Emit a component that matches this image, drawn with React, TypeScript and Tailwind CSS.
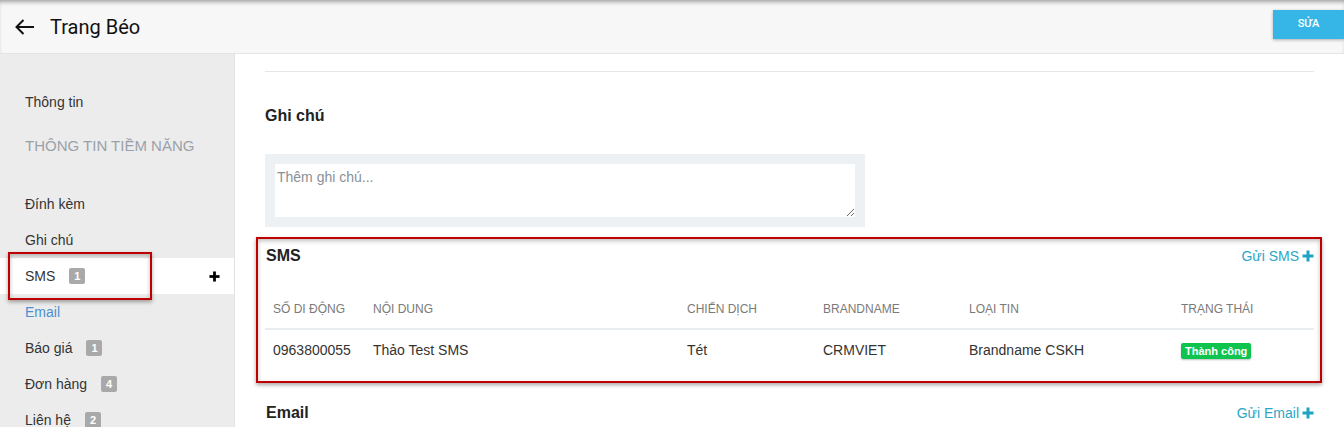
import React from 'react';

// --- DATOS ---
const menu = [
    { label: 'Đính kèm' },
    { label: 'Ghi chú' },
    { label: 'SMS', count: 1, active: true },
    { label: 'Email', link: true },
    { label: 'Báo giá', count: 1 },
    { label: 'Đơn hàng', count: 4 },
    { label: 'Liên hệ', count: 2 },
];

const smsRows = [
    { phone: '0963800055', content: 'Thảo Test SMS', campaign: 'Tét', brand: 'CRMVIET', type: 'Brandname CSKH', status: 'Thành công' },
];

const cols = [
    { title: 'Số di động', w: 'w-[108px] pl-2' },
    { title: 'Nội dung', w: 'w-[314px]' },
    { title: 'Chiến dịch', w: 'w-[136px]' },
    { title: 'Brandname', w: 'w-[146px]' },
    { title: 'Loại tin', w: 'w-[212px]' },
    { title: 'Trạng thái', w: '' },
];

const Badge = ({ n }: { n: number }) => (
    <span className="ml-[14px] inline-flex h-[16px] w-[16px] items-center justify-center rounded-[2px] bg-[#a9a9a9] text-[11px] font-bold text-white">
        {n}
    </span>
);

const PlusIcon = ({ className = '' }: { className?: string }) => (
    <svg viewBox="0 0 12 12" className={className} fill="currentColor">
        <rect x="4.5" y="0.5" width="3" height="11" />
        <rect x="0.5" y="4.5" width="11" height="3" />
    </svg>
);

const SectionHead = ({ title, action }: { title: string; action: string }) => (
    <div className="flex h-[20px] items-center justify-between">
        <h2 className="pl-px text-[16px] font-bold text-[#222]">{title}</h2>
        <a className="flex items-center text-[14px] text-[#2ba6c6]">
            {action}
            <PlusIcon className="ml-[3px] h-[12px] w-[12px] text-[#1fa3c4]" />
        </a>
    </div>
);

const Sidebar = () => (
    <aside className="h-[373px] w-[235px] shrink-0 border-r border-[#e2e2e2] bg-[#ececec] pt-[30px]">
        <div className="flex h-[36px] items-center pl-[25px] text-[14px] text-[#333]">Thông tin</div>
        <div className="mb-[14px] flex h-[52px] items-center pl-[25px] text-[15px] text-[#9ba1a9]">THÔNG TIN TIỀM NĂNG</div>
        {menu.map(item => (
            <div
                key={item.label}
                className={`flex h-[36px] items-center pl-[25px] pr-[14px] text-[14px] ${item.active ? 'bg-white' : ''} ${item.link ? 'text-[#4a90d0]' : 'text-[#333]'}`}
            >
                <span>{item.label}</span>
                {item.count ? <Badge n={item.count} /> : null}
                {item.active && <PlusIcon className="ml-auto h-[11px] w-[11px] text-black" />}
            </div>
        ))}
    </aside>
);

export default function App() {
    return (
        <div className="relative h-[427px] w-[1344px] overflow-hidden bg-white font-['Liberation_Sans',Arial,sans-serif]">
            {/* --- CABECERA --- */}
            <header className="flex h-[54px] items-center border-b border-[#e4e4e4] bg-[#f7f7f7] shadow-[inset_0_4px_4px_-2px_rgba(0,0,0,0.35)]">
                <svg viewBox="0 0 24 24" className="ml-[13px] h-[24px] w-[24px]" fill="none" stroke="#111" strokeWidth="2">
                    <path d="M21 12H3.5M10.5 5l-7 7 7 7" />
                </svg>
                <h1 className="ml-[13px] font-['Roboto',sans-serif] text-[20px] text-[#111]">Trang Béo</h1>
                <button className="ml-auto mt-[10px] h-[29px] w-[71px] self-start bg-[#35b6e6] font-['Roboto',sans-serif] text-[11px] font-medium text-white shadow-[0_1px_3px_rgba(0,0,0,0.3)]">
                    SỬA
                </button>
            </header>

            <div className="flex">
                <Sidebar />

                <main className="flex-1 px-[30px]">
                    <div className="mt-[17px] border-t border-[#e6e6e6]" />

                    <h2 className="mt-[32px] text-[16px] font-bold leading-[24px] text-[#222]">Ghi chú</h2>

                    <div className="mt-[26px] w-[600px] bg-[#edf1f4] p-[10px]">
                        <textarea
                            placeholder="Thêm ghi chú..."
                            className="block h-[53px] w-full resize-y bg-white px-[2px] py-[3px] text-[14px] text-[#333] outline-none placeholder:text-[#8a9098]"
                        />
                    </div>

                    {/* --- SMS --- */}
                    <section className="mt-[19px]">
                        <SectionHead title="SMS" action="Gửi SMS" />
                        <table className="mt-[23px] w-full table-fixed text-left">
                            <thead>
                                <tr className="border-b-2 border-[#e9edf0]">
                                    {cols.map(c => (
                                        <th key={c.title} className={`h-[40px] text-[12px] font-normal uppercase text-[#7a7a7a] ${c.w}`}>
                                            {c.title}
                                        </th>
                                    ))}
                                </tr>
                            </thead>
                            <tbody>
                                {smsRows.map(r => (
                                    <tr key={r.phone} className="text-[14px] text-[#333]">
                                        <td className="h-[42px] pl-2">{r.phone}</td>
                                        <td>{r.content}</td>
                                        <td>{r.campaign}</td>
                                        <td>{r.brand}</td>
                                        <td>{r.type}</td>
                                        <td>
                                            <span className="rounded-[2px] bg-[#0ec44f] px-[4px] py-[2px] text-[11px] font-bold text-white shadow-[0_1px_2px_rgba(0,0,0,0.25)]">
                                                {r.status}
                                            </span>
                                        </td>
                                    </tr>
                                ))}
                            </tbody>
                        </table>
                    </section>

                    <section className="mt-[32px]">
                        <SectionHead title="Email" action="Gửi Email" />
                    </section>
                </main>
            </div>

            {/* marcos rojos de anotación */}
            <div className="pointer-events-none absolute left-[8px] top-[252px] h-[48px] w-[144px] border-2 border-[#c00000] shadow-[0_2px_4px_rgba(0,0,0,0.35),inset_0_2px_4px_rgba(0,0,0,0.25)]" />
            <div className="pointer-events-none absolute left-[256px] top-[237px] h-[146px] w-[1066px] border-2 border-[#c00000] shadow-[0_2px_4px_rgba(0,0,0,0.35),inset_0_2px_4px_rgba(0,0,0,0.25)]" />
        </div>
    );
}
